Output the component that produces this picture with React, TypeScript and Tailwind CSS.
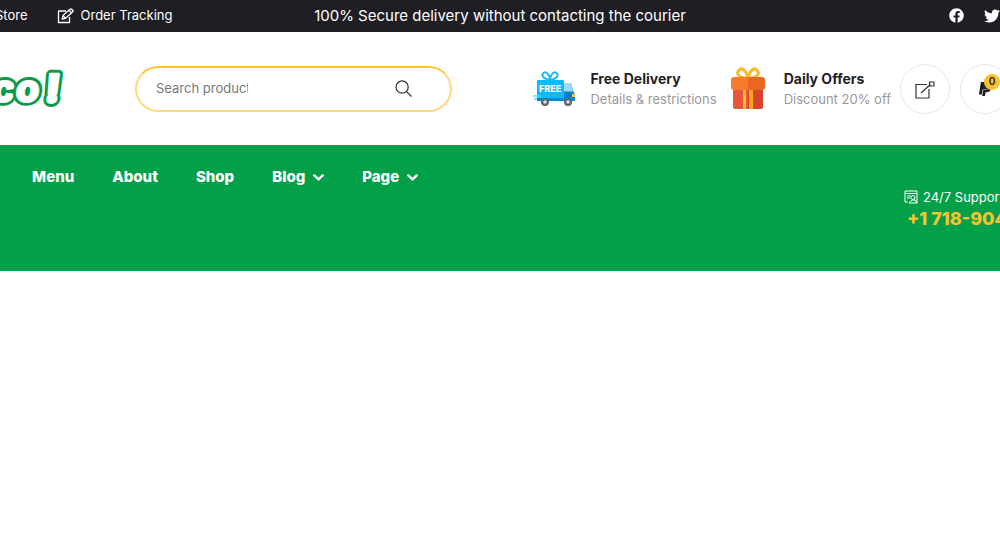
import React from 'react';
import { FaFacebook, FaTwitter, FaPaypal } from 'react-icons/fa';

const navLinks = [
  { label: 'Menu', menu: false },
  { label: 'About', menu: false },
  { label: 'Shop', menu: false },
  { label: 'Blog', menu: true },
  { label: 'Page', menu: true },
];

const logoLetters = [
  { letter: 'c', x: -6, size: 39, outline: 7, inner: 1 },
  { letter: 'o', x: 18, size: 39, outline: 7, inner: 1 },
  { letter: '!', x: 48, size: 38, outline: 9, inner: 3 },
];

function EditIcon() {
  return (
    <svg width="18" height="16" viewBox="0 0 18 16" fill="none" stroke="currentColor" strokeWidth="1.3" strokeLinejoin="round" aria-hidden="true">
      <path d="M9 3H1.5v11.5h11V9" />
      <path d="M5.2 11l.8-3.4L13 1.2c.5-.5 1.2-.5 1.7 0l1 1c.5.5.5 1.1 0 1.6L8.6 10.3z" />
      <path d="M12 2.3l2.6 2.6M6 7.6l2.6 2.6" />
    </svg>
  );
}

function Chevron() {
  return (
    <svg width="11" height="7" viewBox="0 0 11 7" fill="none" stroke="currentColor" strokeWidth="2.4" strokeLinecap="round" strokeLinejoin="round" aria-hidden="true">
      <path d="M1.3 1.4l4.2 4 4.2-4" />
    </svg>
  );
}

function Logo() {
  return (
    <svg width="68" height="44" viewBox="0 0 68 44" role="img" aria-label="co!">
      <g transform="skewX(-6)" fontFamily="Inter, sans-serif" fontWeight="900" strokeLinejoin="round">
        {logoLetters.map(({ letter, x, size, outline, inner }) => (
          <g key={letter} fontSize={size}>
            <text x={x} y="35" fill="#0a9a48" stroke="#0a9a48" strokeWidth={outline}>{letter}</text>
            <text x={x} y="35" fill="#fff" stroke="#fff" strokeWidth={inner} aria-hidden="true">{letter}</text>
          </g>
        ))}
      </g>
    </svg>
  );
}

function Truck() {
  return (
    <svg width="44" height="38" viewBox="0 0 44 38" aria-hidden="true">
      <path d="M18 10C11 9 9 5 11.5 3s6 1 6.500 7c.5-6 4-9 6.500-7s.5 6-6.500 7" fill="none" stroke="#25b9f2" strokeWidth="2" />
      <rect x="5" y="10" width="27" height="21" rx="1" fill="#0cbcfa" />
      <path d="M1 26h8M2 29h8" stroke="#65d7ff" strokeWidth="1.5" />
      <path d="M32 13h7l2.500 9 1.500 2v7H32z" fill="#087fc2" />
      <path d="M32 13h7l2 8.500h-9z" fill="#9cdcf4" />
      <path d="M40 24h3v3h-3z" fill="#ffc928" />
      <path d="M5 28h38v3H5z" fill="#058bd0" />
      <circle cx="13" cy="32" r="4" fill="#576574" /><circle cx="13" cy="32" r="1.8" fill="#d9e1e7" />
      <circle cx="36" cy="32" r="4" fill="#576574" /><circle cx="36" cy="32" r="1.8" fill="#d9e1e7" />
      <text x="7" y="22" fontFamily="Inter, sans-serif" fontSize="9" fontWeight="800" fill="#fff">FREE</text>
    </svg>
  );
}

function Gift() {
  return (
    <svg width="34" height="43" viewBox="0 0 34 43" aria-hidden="true">
      <path d="M16 11C7 11 5 6 8 3s7 0 9 8c2-8 6-11 9-8s1 8-8 8" fill="none" stroke="#fcb72b" strokeWidth="3" />
      <path d="M2 22h15v20H4q-2 0-2-2z" fill="#e7573c" />
      <path d="M17 22h15v18q0 2-2 2H17z" fill="#d8432c" />
      <path d="M3 10h14v13H3q-3 0-3-3v-7q0-3 3-3z" fill="#f57c2a" />
      <path d="M17 10h14q3 0 3 3v7q0 3-3 3H17z" fill="#e96722" />
      <path d="M12 23h3v19h-3z" fill="#ffc030" /><path d="M18 23h4v19h-4z" fill="#f7a51c" />
    </svg>
  );
}

function Promo({ icon, title, note }: { icon: React.ReactNode; title: string; note: string }) {
  return (
    <div className="flex items-center gap-[14px] whitespace-nowrap">
      <span className="flex w-[44px] justify-center">{icon}</span>
      <div>
        <p className="text-[14px] leading-[21px] font-bold text-[#1e1e24]">{title}</p>
        <p className="text-[13px] leading-[21px] text-[#999]">{note}</p>
      </div>
    </div>
  );
}

export default function App() {
  return (
    <div className="overflow-hidden bg-white font-[Inter,sans-serif]">
      <header>
        <div className="grid h-8 grid-cols-[1fr_auto_1fr] items-center bg-[#1e1e24] text-[13px] whitespace-nowrap text-white">
          <div className="-ml-[5px] flex items-center gap-[29px]">
            <a href="#store">Store</a>
            <a href="#tracking" className="flex items-center gap-[6px]"><EditIcon />Order Tracking</a>
          </div>
          <p className="text-[15px]">100% Secure delivery without contacting the courier</p>
          <div className="flex justify-end gap-5">
            <a href="#facebook" aria-label="Facebook"><FaFacebook size={15} /></a>
            <a href="#twitter" aria-label="Twitter"><FaTwitter size={16} /></a>
          </div>
        </div>

        <div className="flex h-[113px] items-center">
          <a href="#home" className="shrink-0"><Logo /></a>
          <form className="ml-[67px] flex h-[46px] w-[317px] shrink-0 items-center justify-between rounded-full border-2 border-[#ffd97a] border-t-[#fcc536] pr-[38px] pl-[19px]">
            <input type="text" aria-label="Search products" placeholder="Search products" className="w-[92px] bg-transparent text-[13px] outline-none placeholder:text-[#777]" />
            <button type="submit" aria-label="Search">
              <svg width="17" height="17" viewBox="0 0 18 18" fill="none" stroke="#333" strokeWidth="1.3" aria-hidden="true"><circle cx="7.5" cy="7.5" r="6.5" /><path d="M12 12l5.500 5.500" /></svg>
            </button>
          </form>
          <div className="ml-auto flex shrink-0 items-center">
            <Promo icon={<Truck />} title="Free Delivery" note="Details & restrictions" />
            <div className="ml-[9px]"><Promo icon={<Gift />} title="Daily Offers" note="Discount 20% off" /></div>
            <a href="#share" aria-label="Open" className="ml-[9px] flex size-[50px] items-center justify-center rounded-full border border-[#e4e6e8]">
              <svg width="20" height="20" viewBox="0 0 20 20" fill="none" stroke="#333" strokeWidth="1.2" aria-hidden="true"><path d="M12 5.500H1v13.500h13V10M6 14L15.500 5.500M14.500 3h4.500v4h-4.500z" /></svg>
            </a>
            <a href="#cart" aria-label="Cart" className="relative -mr-[10px] ml-[10px] flex size-[50px] items-center justify-center rounded-full border border-[#e4e6e8] text-[#1e1e24]">
              <FaPaypal size={16} />
              <span className="absolute top-[9px] right-[9px] flex size-4 items-center justify-center rounded-full bg-[#fcc22d] text-[10px] font-semibold">0</span>
            </a>
          </div>
        </div>

        <div className="flex h-[126px] justify-between overflow-hidden bg-[#02a149] text-white">
          <nav className="flex items-start gap-[38px] pt-[19px] pl-8 text-[15px] leading-[26px] font-extrabold">
            {navLinks.map((link) => (
              <a key={link.label} href={'#' + link.label.toLowerCase()} className="flex items-center gap-2">{link.label}{link.menu && <Chevron />}</a>
            ))}
          </nav>
          <div className="w-[96px] shrink-0 pt-[42px] whitespace-nowrap">
            <p className="flex items-center gap-[5px] text-[13px] leading-[20px]">
              <svg width="14" height="14" viewBox="0 0 14 14" fill="none" stroke="currentColor" aria-hidden="true" className="shrink-0"><path d="M13 6V1H1v11h3M1 3.500h12M3 6h4M3 8h3M13 6v7" /><circle cx="9" cy="7.500" r="2" /><path d="M5 13l3-3h3l2 3z" /></svg>
              24/7 Support
            </p>
            <a href="tel:+1718904" className="ml-[3px] block text-[18px] leading-[24px] font-extrabold text-[#fcc22d]">+1 718-904</a>
          </div>
        </div>
      </header>
    </div>
  );
}
